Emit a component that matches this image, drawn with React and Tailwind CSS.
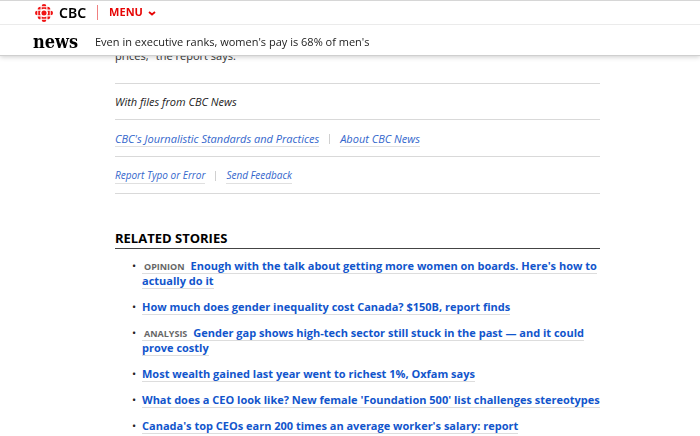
import React from "react";

const stories = [
  {
    flag: "Opinion",
    title:
      "Enough with the talk about getting more women on boards. Here's how to actually do it",
  },
  { title: "How much does gender inequality cost Canada? $150B, report finds" },
  {
    flag: "Analysis",
    title:
      "Gender gap shows high-tech sector still stuck in the past — and it could prove costly",
  },
  { title: "Most wealth gained last year went to richest 1%, Oxfam says" },
  {
    title:
      "What does a CEO look like? New female 'Foundation 500' list challenges stereotypes",
  },
  { title: "Canada's top CEOs earn 200 times an average worker's salary: report" },
];

const Gem = () => (
  <svg viewBox="-50 -50 100 100" className="size-[18px]" fill="#f01414" aria-hidden="true">
    <circle r="14" />
    {[0, 90, 180, 270].map((angle) => (
      <g key={angle} transform={`rotate(${angle})`}>
        <path d="M-13-19V-32H13V-19A24 24 0 0 0-13-19Z" />
        <path d="M-13-37A13 13 0 0 1 13-37Z" />
        <path d="M19-19V-35A16 16 0 0 1 35-19Z" />
      </g>
    ))}
  </svg>
);

const FooterLink = ({ children }) => (
  <a href="#" className="border-b border-[#e0e0e0] text-[#3366cc]">
    {children}
  </a>
);

const Header = () => (
  <header className="fixed inset-x-0 top-0 z-10 border-b border-[#cfcfcf] bg-white shadow-[0_1px_5px_rgba(0,0,0,0.2)]">
    <div className="flex h-[25px] items-center border-t border-b border-t-[#d6d6d6] border-b-[#ebebeb] pl-[35px]">
      <a href="#" className="flex items-center gap-1.5">
        <Gem />
        <span className="font-['Noto_Sans',sans-serif] text-sm font-semibold text-black">CBC</span>
      </a>
      <span className="mx-[11px] h-[15px] w-px bg-[#f08080]" />
      <button type="button" className="flex items-center gap-1 text-[11px] font-bold text-[#e60505]">
        MENU
        <svg viewBox="0 0 10 10" className="size-2.5" fill="none" stroke="currentColor" strokeWidth="1.8" aria-hidden="true">
          <path d="M2 4l3 2.5L8 4" />
        </svg>
      </button>
    </div>
    <div className="flex h-[30px] items-center pt-1 pl-[33px]">
      <a href="#" className="w-[62px] font-['DejaVu_Serif_Condensed','DejaVu_Serif',serif] text-lg leading-5 font-bold text-black">
        news
      </a>
      <span className="text-[11px] text-[#222222]">
        Even in executive ranks, women's pay is 68% of men's
      </span>
    </div>
  </header>
);

export default function App() {
  return (
    <div className="min-h-screen overflow-hidden bg-white font-['Open_Sans','Noto_Sans',sans-serif] text-[#222222]">
      <Header />
      <main className="pt-12 pr-[100px] pl-[115px]">
        <p className="mb-[19px] text-[11px] leading-4 text-[#333333]">prices," the report says.</p>
        <div className="divide-y divide-[#d9d9d9] border-y border-[#d9d9d9] italic">
          <p className="flex h-9 items-center pt-0.5 text-[11px]">With files from CBC News</p>
          <div className="flex h-[37px] items-center gap-2.5 pt-px text-[11px] leading-[15px]">
            <FooterLink>CBC's Journalistic Standards and Practices</FooterLink>
            <span className="h-2.5 w-px bg-[#d0d0d0]" />
            <FooterLink>About CBC News</FooterLink>
          </div>
          <div className="flex h-9 items-center gap-2.5 pt-px text-[10px] leading-[15px]">
            <FooterLink>Report Typo or Error</FooterLink>
            <span className="h-2.5 w-px bg-[#d0d0d0]" />
            <FooterLink>Send Feedback</FooterLink>
          </div>
        </div>
        <section className="mt-[34px]">
          <h2 className="border-b border-[#444444] text-[13px] leading-5 font-bold text-black uppercase">
            Related Stories
          </h2>
          <ul className="mt-[9px] flex flex-col gap-[11px] pl-[27px] text-[11px] leading-[15px]">
            {stories.map((story) => (
              <li key={story.title} className="relative">
                <span className="absolute -left-2.5">•</span>
                <a href="#" className="border-b border-[#dddddd] font-bold text-[#1155cc]">
                  {story.flag && (
                    <span className="mr-1.5 ml-0.5 text-[9px] leading-none text-[#666666] uppercase">
                      {story.flag}
                    </span>
                  )}
                  {story.title}
                </a>
              </li>
            ))}
          </ul>
        </section>
      </main>
    </div>
  );
}
